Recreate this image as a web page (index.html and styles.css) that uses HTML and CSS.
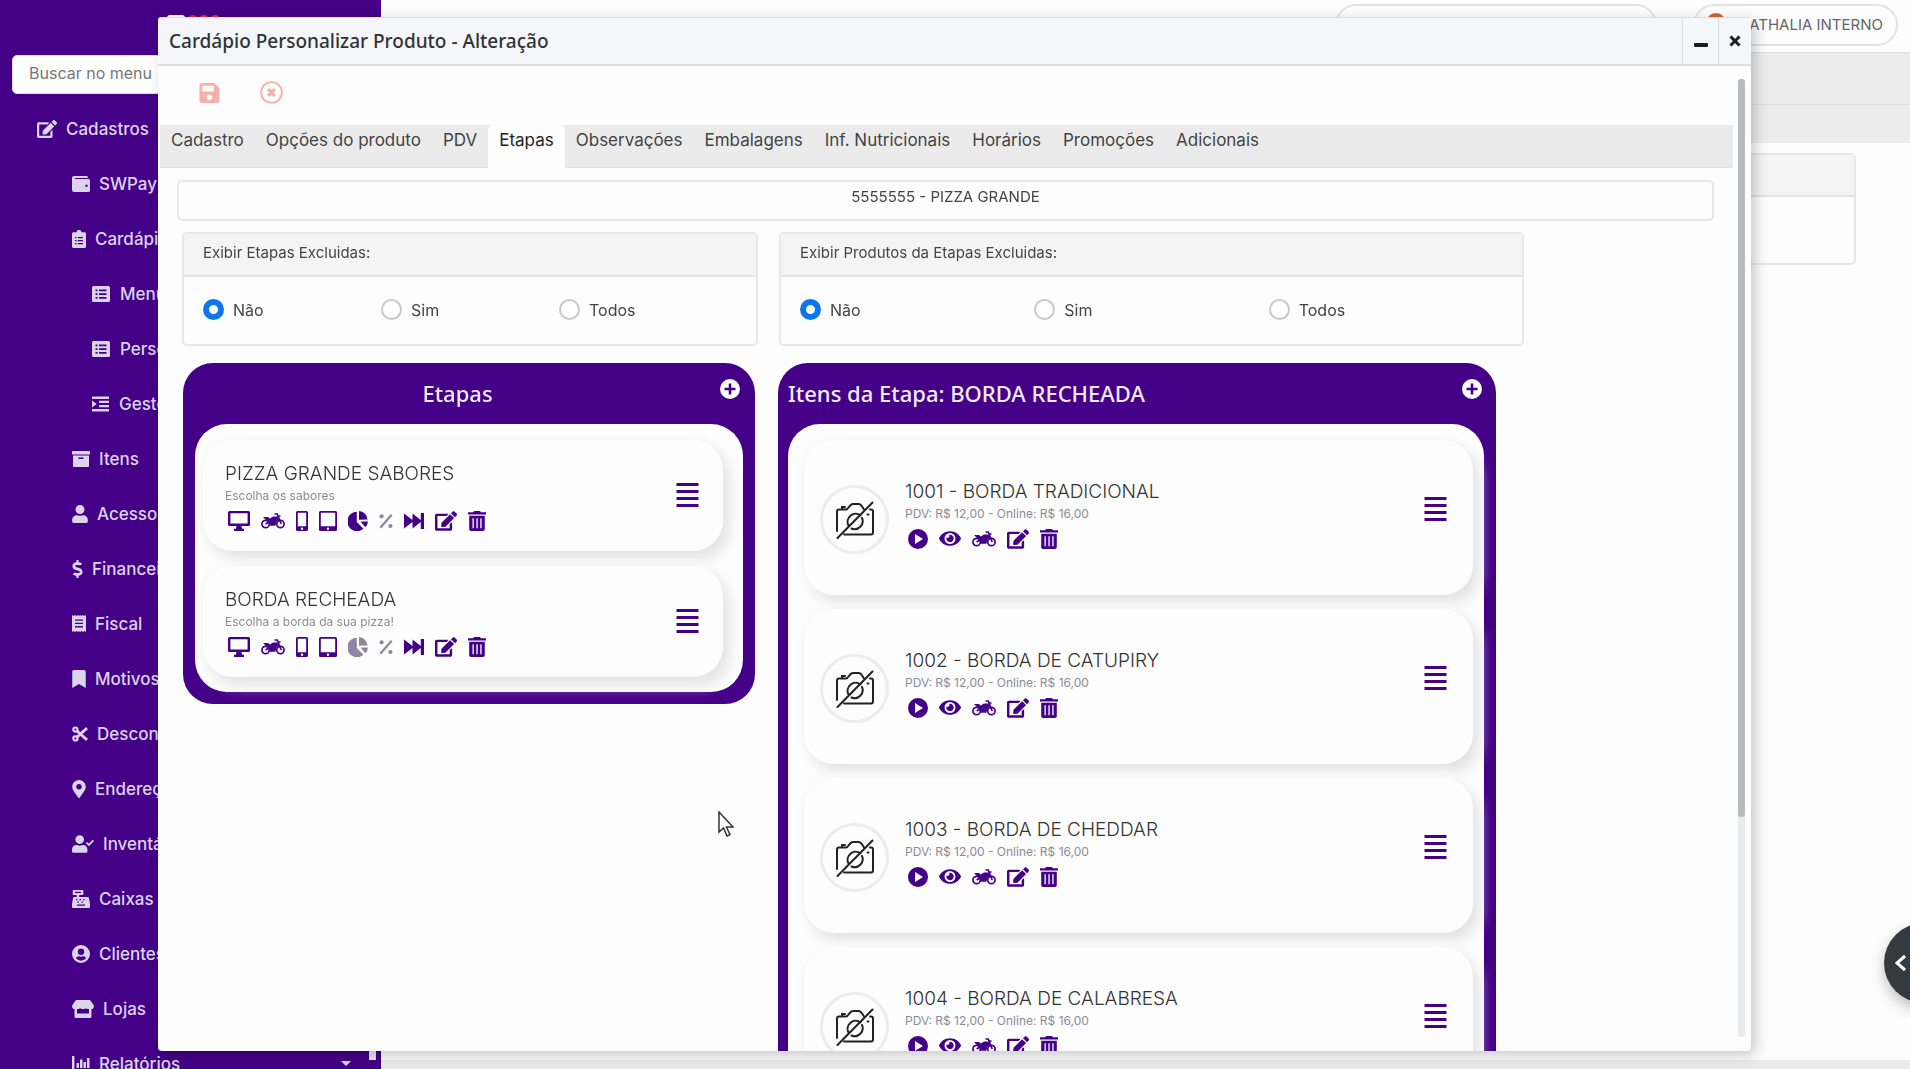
FILE: index.html
```
<!DOCTYPE html>
<html lang="pt-BR">
<head>
    <meta charset="UTF-8">
    <meta name="viewport" content="width=device-width, initial-scale=1.0">
    <title>Cardápio Personalizar Produto - Alteração</title>
    <link rel="stylesheet" href="styles.css">
</head>
<body>
    <!-- Icons -->
    <svg class="sprite" aria-hidden="true">
        <symbol id="i-edit" viewBox="0 0 576 512"><path d="M402.6 83.2l90.2 90.2c3.8 3.8 3.8 10 0 13.8L274.4 405.6l-92.8 10.3c-12.4 1.4-22.9-9.1-21.5-21.5l10.3-92.8L388.8 83.2c3.8-3.8 10-3.8 13.8 0zm162-22.9l-48.8-48.8c-15.2-15.2-39.9-15.2-55.2 0l-35.4 35.4c-3.8 3.8-3.8 10 0 13.8l90.2 90.2c3.8 3.8 10 3.8 13.8 0l35.4-35.4c15.2-15.3 15.2-40 0-55.2zM384 346.2V448H64V128h229.8c3.2 0 6.2-1.3 8.5-3.5l40-40c7.6-7.6 2.2-20.5-8.5-20.5H48C21.5 64 0 85.5 0 112v352c0 26.5 21.5 48 48 48h352c26.5 0 48-21.5 48-48V306.2c0-10.7-12.9-16-20.5-8.5l-40 40c-2.2 2.3-3.5 5.3-3.5 8.5z"/></symbol>
        <symbol id="i-save" viewBox="0 32 448 448"><path d="M433.941 129.941l-83.882-83.882A48 48 0 0 0 316.118 32H48C21.49 32 0 53.49 0 80v352c0 26.51 21.49 48 48 48h352c26.51 0 48-21.49 48-48V163.882a48 48 0 0 0-14.059-33.941zM224 416c-35.346 0-64-28.654-64-64 0-35.346 28.654-64 64-64s64 28.654 64 64c0 35.346-28.654 64-64 64zm96-304.52V212c0 6.627-5.373 12-12 12H76c-6.627 0-12-5.373-12-12V108c0-6.627 5.373-12 12-12h228.52c3.183 0 6.235 1.264 8.485 3.515l3.48 3.48A11.996 11.996 0 0 1 320 111.48z"/></symbol>
        <symbol id="i-cancel" viewBox="0 0 24 24"><circle cx="12" cy="12" r="10.8" fill="none" stroke="currentColor" stroke-width="2"/><path d="M8.5 8.5l7 7M15.5 8.5l-7 7" stroke="currentColor" stroke-width="3.4"/></symbol>
        <symbol id="i-wallet" viewBox="0 0 18 18"><path fill-rule="evenodd" d="M2 1h12.500a1.500 1.500 0 0 1 1.500 1.500V3H3v1h13.500A1.500 1.500 0 0 1 18 5.500v10a1.500 1.500 0 0 1-1.500 1.500H2.500A2.500 2.500 0 0 1 0 14.500V3a2 2 0 0 1 2-2zm12.500 8.500a1.200 1.200 0 1 0 0 2.400 1.200 1.200 0 0 0 0-2.400z"/></symbol>
        <symbol id="i-clip" viewBox="0 0 14 18"><path fill-rule="evenodd" d="M1.500 2.300H4.600a2.400 2.400 0 0 1 4.800 0h3.100A1.500 1.500 0 0 1 14 3.800v12.700a1.500 1.500 0 0 1-1.500 1.500h-11A1.500 1.500 0 0 1 0 16.500V3.800a1.500 1.500 0 0 1 1.500-1.500zM3 7v1.200h1.500V7zm2.700 0v1.200H11V7zM3 10v1.200h1.500V10zm2.700 0v1.200H11V10zM3 13v1.200h1.500V13zm2.700 0v1.200H11V13z"/></symbol>
        <symbol id="i-list" viewBox="0 0 18 16"><path fill-rule="evenodd" d="M1.500 0h15A1.500 1.500 0 0 1 18 1.500v13a1.500 1.500 0 0 1-1.500 1.500h-15A1.500 1.500 0 0 1 0 14.500v-13A1.500 1.500 0 0 1 1.500 0zM3.500 3.500v1.800h2V3.500zm3.500 0v1.800h7.500V3.500zM3.500 7.200V9h2V7.200zm3.500 0V9h7.500V7.200zM3.500 11v1.800h2V11zM7 11v1.800h7.500V11z"/></symbol>
        <symbol id="i-indent" viewBox="0 0 18 16"><path d="M0 0h18v2.600H0zM7.500 4.500H18V7H7.500zM7.500 9H18v2.500H7.500zM0 13.400h18V16H0zM0 4.300L5 8l-5 3.700z"/></symbol>
        <symbol id="i-box" viewBox="0 0 18 16"><path fill-rule="evenodd" d="M.8 0h16.400a.8.8 0 0 1 .8.800V3.500H0V.8A.8.800 0 0 1 .8 0zM1 4.600h16V15a1 1 0 0 1-1 1H2a1 1 0 0 1-1-1zm5.500 2v1.300h5V6.600z"/></symbol>
        <symbol id="i-user" viewBox="0 0 448 512"><path d="M224 256c70.700 0 128-57.300 128-128S294.700 0 224 0 96 57.300 96 128s57.300 128 128 128zm89.600 32h-16.700c-22.200 10.200-46.900 16-72.900 16s-50.600-5.800-72.900-16h-16.700C60.200 288 0 348.200 0 422.400V464c0 26.500 21.500 48 48 48h352c26.500 0 48-21.500 48-48v-41.600c0-74.200-60.200-134.400-134.400-134.400z"/></symbol>
        <symbol id="i-dollar" viewBox="0 0 288 512"><path d="M209.2 233.400l-108-31.600C88.700 198.200 80 186.500 80 173.500c0-16.300 13.200-29.500 29.500-29.500h66.300c12.200 0 24.200 3.700 34.200 10.500 6.100 4.100 14.300 3.100 19.500-2l34.800-34c7.100-6.900 6.100-18.400-1.800-24.500C238 74.800 207.400 64.100 176 64V16c0-8.800-7.200-16-16-16h-32c-8.800 0-16 7.200-16 16v48h-2.500C45.800 64-5.400 118.700.5 183.600c4.200 46.100 39.400 83.600 83.800 96.600l102.500 30c12.500 3.700 21.200 15.300 21.200 28.300 0 16.300-13.200 29.500-29.500 29.500h-66.300C100 368 88 364.300 78 357.500c-6.100-4.100-14.300-3.100-19.500 2l-34.800 34c-7.100 6.900-6.100 18.400 1.800 24.500 24.500 19.200 55.100 29.900 86.500 30v48c0 8.800 7.200 16 16 16h32c8.800 0 16-7.200 16-16v-48.200c46.600-.9 90.300-28.600 105.700-72.700 21.500-61.600-14.600-124.800-72.500-141.700z"/></symbol>
        <symbol id="i-receipt" viewBox="0 0 14 17"><path fill-rule="evenodd" d="M0 0l1.500 1L3 0l1.500 1L6 0l1 1 1-1 1.500 1L11 0l1.500 1L14 0v17l-1.500-1-1.500 1-1.500-1L8 17l-1-1-1 1-1.500-1L3 17l-1.500-1L0 17zM3 4.500v1.300h8V4.500zm0 3.300v1.300h8V7.800zm0 3.300v1.300h8v-1.300z"/></symbol>
        <symbol id="i-bookmark" viewBox="0 0 384 512"><path d="M0 512V48C0 21.490 21.490 0 48 0h288c26.510 0 48 21.490 48 48v464L192 400 0 512z"/></symbol>
        <symbol id="i-cut" viewBox="0 0 16 16"><g fill="none" stroke="currentColor"><circle cx="3.400" cy="3.600" r="2.100" stroke-width="2.200"/><circle cx="3.400" cy="12.400" r="2.100" stroke-width="2.200"/><path d="M5 5l10 8.800M5 11l10-8.800" stroke-width="2.900"/></g></symbol>
        <symbol id="i-pin" viewBox="0 0 384 512"><path d="M172.268 501.670C26.970 291.031 0 269.413 0 192 0 85.961 85.961 0 192 0s192 85.961 192 192c0 77.413-26.970 99.031-172.268 309.670-9.535 13.774-29.930 13.773-39.464 0zM192 272c44.183 0 80-35.817 80-80s-35.817-80-80-80-80 35.817-80 80 35.817 80 80 80z"/></symbol>
        <symbol id="i-usercheck" viewBox="0 0 640 512"><path d="M224 256c70.700 0 128-57.300 128-128S294.700 0 224 0 96 57.300 96 128s57.300 128 128 128zm89.600 32h-16.700c-22.200 10.200-46.900 16-72.900 16s-50.600-5.800-72.900-16h-16.700C60.200 288 0 348.200 0 422.400V464c0 26.500 21.500 48 48 48h352c26.500 0 48-21.500 48-48v-41.600c0-74.200-60.200-134.400-134.400-134.400z"/><path d="M420 215l72 70 130-135" fill="none" stroke="currentColor" stroke-width="56"/></symbol>
        <symbol id="i-register" viewBox="0 0 18 18"><path fill-rule="evenodd" d="M1.500 0h9a.8.8 0 0 1 .8.800v3.400a.8.8 0 0 1-.8.800H7.200v2H15.500a1.500 1.500 0 0 1 1.500 1.200L18 14v3a1 1 0 0 1-1 1H1a1 1 0 0 1-1-1v-3L1 8.200A1.500 1.500 0 0 1 2.500 7h2.200V5H1.500a.8.8 0 0 1-.8-.8V.8A.8.800 0 0 1 1.500 0zM3 1.800v1.200h6V1.800zM4 9v1.300h1.500V9zm3.500 0v1.300H9V9zM11 9v1.300h1.500V9zM5.500 11.500v1.300H7v-1.300zm4 0v1.300H11v-1.300zM5 14.600v1.200h8v-1.200z"/></symbol>
        <symbol id="i-usercircle" viewBox="0 0 18 18"><path fill-rule="evenodd" d="M9 0a9 9 0 1 1 0 18A9 9 0 0 1 9 0zm0 3.500a3.200 3.200 0 1 0 0 6.400 3.200 3.200 0 0 0 0-6.400zM3.900 13.300a6.700 6.700 0 0 0 10.200 0c-.5-1.300-1.700-2-3-2-1.500.6-2.700.6-4.200 0-1.300 0-2.500.7-3 2z"/></symbol>
        <symbol id="i-store" viewBox="0 0 22 18"><path fill-rule="evenodd" d="M4 0h14l3.600 5c1 2-.3 4-2.100 4V16.500a1.500 1.500 0 0 1-1.500 1.500H4a1.500 1.500 0 0 1-1.500-1.500V9C.7 9-.6 7 .4 5zM5 9v4.500h12V9c-1 .2-2 0-3-.8-1.800 1.200-4.200 1.200-6 0C7 9 6 9.200 5 9z"/></symbol>
        <symbol id="i-chart" viewBox="0 0 18 16"><path d="M0 0h2.400v13.600H18V16H0zM4.500 7H7v5H4.500zM8 3.500h2.500V12H8zM11.500 6H14v6h-2.500zM15 2h2.500v10H15z"/></symbol>
        <symbol id="i-plus" viewBox="0 0 20 20"><path fill-rule="evenodd" d="M10 0a10 10 0 1 1 0 20 10 10 0 0 1 0-20zM8.700 4.500v4.200H4.500v2.600h4.200v4.200h2.600v-4.200h4.200V8.700h-4.200V4.500z"/></symbol>
        <symbol id="i-monitor" viewBox="0 0 22 20"><path fill-rule="evenodd" d="M1.500 0h19A1.500 1.500 0 0 1 22 1.500v12a1.500 1.500 0 0 1-1.500 1.500h-7l.6 2.800H16V20H6v-2.200h1.900L8.500 15h-7A1.500 1.500 0 0 1 0 13.500v-12A1.500 1.500 0 0 1 1.500 0zM2.400 2.200v10.200h17.200V2.200z"/></symbol>
        <symbol id="i-moto" viewBox="0 0 24 16"><g fill="none" stroke="currentColor"><circle cx="4.600" cy="11" r="3.700" stroke-width="1.700"/><circle cx="19.400" cy="11" r="3.700" stroke-width="1.700"/><path d="M13.500 1h2.700l4 10M19.500 3h-2.700M4.600 11l4-2.500" stroke-width="1.700"/></g><path d="M2 4h5l1.800 1.500L12 3.500h4.500L18 6.500l-2.300 2-1.400 4.200H8.500C8.500 9.500 6.500 7.500 4.500 6.500z"/></symbol>
        <symbol id="i-phone" viewBox="0 0 12 20"><path fill-rule="evenodd" d="M1.500 0h9A1.500 1.500 0 0 1 12 1.500v17a1.500 1.500 0 0 1-1.500 1.500h-9A1.500 1.500 0 0 1 0 18.500v-17A1.500 1.500 0 0 1 1.500 0zM1.800 1.800v13.400h8.400V1.800zM6 16.500a1.200 1.200 0 1 0 0 2.400 1.200 1.200 0 0 0 0-2.400z"/></symbol>
        <symbol id="i-tablet" viewBox="0 0 18 20"><path fill-rule="evenodd" d="M1.500 0h15A1.500 1.500 0 0 1 18 1.500v17a1.500 1.500 0 0 1-1.500 1.500h-15A1.500 1.500 0 0 1 0 18.500v-17A1.500 1.500 0 0 1 1.500 0zM1.800 1.800v13.400h14.400V1.800zM9 16.500a1.200 1.200 0 1 0 0 2.400 1.200 1.200 0 0 0 0-2.400z"/></symbol>
        <symbol id="i-pie" viewBox="0 0 20 20"><path d="M8.800.8v10.100l6.600 6.800A9.700 9.700 0 1 1 8.800.8zM11 0a9 9 0 0 1 8.600 8.600L11 8.800zM12.500 10.600H20a9 9 0 0 1-2.600 5.600z"/></symbol>
        <symbol id="i-percent" viewBox="0 0 14 16"><path d="M1.300 14.700L12.700 1.800" stroke="currentColor" stroke-width="2.200"/><circle cx="2.600" cy="3.300" r="2.100"/><circle cx="11.400" cy="13" r="2.100"/></symbol>
        <symbol id="i-ff" viewBox="0 0 20 16"><path d="M0 .5L8.500 7V.5L16.800 7V0H20v16h-3.200V9L8.500 15.500V9L0 15.500z"/></symbol>
        <symbol id="i-trash" viewBox="0 0 18 20"><path fill-rule="evenodd" d="M6 0h6l.8 1.300H18v2.200H0V1.300h5.200zM1.200 4.700h15.600v13.500A1.800 1.800 0 0 1 15 20H3a1.800 1.800 0 0 1-1.800-1.800zM4.500 7.200v10h1.300v-10zm3.900 0v10h1.300v-10zm3.900 0v10h1.300v-10z"/></symbol>
        <symbol id="i-play" viewBox="0 0 20 20"><path fill-rule="evenodd" d="M10 0a10 10 0 1 1 0 20 10 10 0 0 1 0-20zM7 5v10l8-5z"/></symbol>
        <symbol id="i-eye" viewBox="0 64 576 384"><path d="M572.520 241.400C518.290 135.590 410.930 64 288 64S57.680 135.640 3.480 241.410a32.350 32.350 0 0 0 0 29.190C57.710 376.410 165.070 448 288 448s230.320-71.640 284.520-177.410a32.350 32.350 0 0 0 0-29.190zM288 400a144 144 0 1 1 144-144 143.930 143.930 0 0 1-144 144zm0-240a95.310 95.310 0 0 0-25.310 3.790 47.850 47.850 0 0 1-66.900 66.900A95.780 95.780 0 1 0 288 160z"/></symbol>
        <symbol id="i-bars" viewBox="0 0 22 24"><path d="M0 0h22v3H0zM0 7h22v3H0zM0 14h22v3H0zM0 21h22v3H0z"/></symbol>
        <symbol id="i-nophoto" viewBox="0 0 40 38"><g fill="none" stroke="currentColor" stroke-width="2" stroke-linecap="round"><path d="M29 8.500c-1.500-2-2-5-5-5.500h-6c-4 0-4 5.500-7 5.500H4a2 2 0 0 0-2 2V30M7 8V6h3M9 33.500h27a2 2 0 0 0 2-2v-21a2 2 0 0 0-2-2h-1M25.500 14.500a8 8 0 0 0-12 10M16.500 27.500A8 8 0 0 0 27 17M2.500 37L37.500 1.500M32.500 13.500h1"/></g></symbol>
    </svg>

    <header class="topbar">
        <div class="top-search"></div>
        <button class="user-pill"><span class="avatar"></span>NATHALIA INTERNO</button>
    </header>

    <main class="page">
        <div class="crumbs"></div>
        <div class="crumbs second"></div>
        <div class="page-card"><div class="page-card-head"></div></div>
        <div class="page-foot"></div>
    </main>

    <aside class="sidebar">
        <svg class="logo" viewBox="0 0 56 24"><rect width="18" height="24" rx="3" fill="#fff"/><g fill="#d8304a"><circle cx="26" cy="5" r="5"/><circle cx="37" cy="5" r="5"/><circle cx="48" cy="5" r="5"/></g></svg>
        <input class="menu-search" type="text" placeholder="Buscar no menu" aria-label="Buscar no menu">
        <nav class="menu">
            <a href="#" class="top"><svg width="20" height="18"><use href="#i-edit"/></svg>Cadastros</a>
            <a href="#"><svg width="18" height="18"><use href="#i-wallet"/></svg>SWPay</a>
            <a href="#"><svg width="14" height="18"><use href="#i-clip"/></svg>Cardápio</a>
            <a href="#" class="sub"><svg width="18" height="16"><use href="#i-list"/></svg>Menu</a>
            <a href="#" class="sub"><svg width="18" height="16"><use href="#i-list"/></svg>Personalizar</a>
            <a href="#" class="sub"><svg width="17" height="16"><use href="#i-indent"/></svg>Gestor</a>
            <a href="#"><svg width="18" height="16"><use href="#i-box"/></svg>Itens</a>
            <a href="#"><svg width="16" height="18"><use href="#i-user"/></svg>Acessos</a>
            <a href="#"><svg width="11" height="18"><use href="#i-dollar"/></svg>Financeiro</a>
            <a href="#"><svg width="14" height="17"><use href="#i-receipt"/></svg>Fiscal</a>
            <a href="#"><svg width="14" height="18"><use href="#i-bookmark"/></svg>Motivos</a>
            <a href="#"><svg width="16" height="16"><use href="#i-cut"/></svg>Descontos</a>
            <a href="#"><svg width="14" height="18"><use href="#i-pin"/></svg>Endereços</a>
            <a href="#"><svg width="22" height="18"><use href="#i-usercheck"/></svg>Inventário</a>
            <a href="#"><svg width="18" height="18"><use href="#i-register"/></svg>Caixas</a>
            <a href="#"><svg width="18" height="18"><use href="#i-usercircle"/></svg>Clientes</a>
            <a href="#"><svg width="22" height="18"><use href="#i-store"/></svg>Lojas</a>
            <a href="#"><svg width="18" height="16"><use href="#i-chart"/></svg>Relatórios<span class="caret"></span></a>
        </nav>
        <div class="side-scroll"></div>
    </aside>

    <button class="side-toggle" aria-label="Abrir painel"><svg width="12" height="18" viewBox="0 0 12 18"><path d="M10 2L2 9l8 7" fill="none" stroke="#fff" stroke-width="3"/></svg></button>

    <!-- Window -->
    <section class="window">
        <header class="window-head">
            <h1>Cardápio Personalizar Produto - Alteração</h1>
            <button class="win-btn min" aria-label="Minimizar"><svg width="14" height="14" viewBox="0 0 14 14"><rect y="9" width="14" height="4" rx="1"/></svg></button>
            <button class="win-btn" aria-label="Fechar"><svg width="12" height="12" viewBox="0 0 12 12"><path d="M1.500 1.500l9 9M10.500 1.500l-9 9" stroke="currentColor" stroke-width="3"/></svg></button>
        </header>

        <div class="toolbar">
            <button aria-label="Salvar"><svg width="21" height="20"><use href="#i-save"/></svg></button>
            <button aria-label="Cancelar"><svg width="23" height="23"><use href="#i-cancel"/></svg></button>
        </div>

        <nav class="tabs">
            <button>Cadastro</button>
            <button>Opções do produto</button>
            <button>PDV</button>
            <button class="active">Etapas</button>
            <button>Observações</button>
            <button>Embalagens</button>
            <button>Inf. Nutricionais</button>
            <button>Horários</button>
            <button>Promoções</button>
            <button>Adicionais</button>
        </nav>

        <div class="window-body">
            <div class="product-name">5555555 - PIZZA GRANDE</div>

            <div class="columns filters">
                <fieldset class="filter">
                    <legend>Exibir Etapas Excluidas:</legend>
                    <div class="options">
                        <label><input type="radio" name="etapas" checked>Não</label>
                        <label><input type="radio" name="etapas">Sim</label>
                        <label><input type="radio" name="etapas">Todos</label>
                    </div>
                </fieldset>
                <fieldset class="filter">
                    <legend>Exibir Produtos da Etapas Excluidas:</legend>
                    <div class="options">
                        <label><input type="radio" name="produtos" checked>Não</label>
                        <label><input type="radio" name="produtos">Sim</label>
                        <label><input type="radio" name="produtos">Todos</label>
                    </div>
                </fieldset>
            </div>

            <div class="columns panels">
                <section class="panel steps">
                    <header><h2>Etapas</h2><button aria-label="Adicionar etapa"><svg width="20" height="20"><use href="#i-plus"/></svg></button></header>
                    <div class="list">
                        <article class="card">
                            <div class="info">
                                <h3>PIZZA GRANDE SABORES</h3>
                                <p>Escolha os sabores</p>
                                <div class="actions">
                                    <button aria-label="PDV"><svg width="22" height="20"><use href="#i-monitor"/></svg></button>
                                    <button aria-label="Delivery"><svg width="24" height="16"><use href="#i-moto"/></svg></button>
                                    <button aria-label="Celular"><svg width="12" height="20"><use href="#i-phone"/></svg></button>
                                    <button aria-label="Tablet"><svg width="18" height="20"><use href="#i-tablet"/></svg></button>
                                    <button aria-label="Fracionar"><svg width="20" height="20"><use href="#i-pie"/></svg></button>
                                    <button class="off" aria-label="Percentual"><svg width="14" height="16"><use href="#i-percent"/></svg></button>
                                    <button aria-label="Avançar"><svg width="20" height="16"><use href="#i-ff"/></svg></button>
                                    <button aria-label="Editar"><svg width="22" height="20"><use href="#i-edit"/></svg></button>
                                    <button aria-label="Excluir"><svg width="18" height="20"><use href="#i-trash"/></svg></button>
                                </div>
                            </div>
                            <button class="drag" aria-label="Mover"><svg width="23" height="24"><use href="#i-bars"/></svg></button>
                        </article>
                        <article class="card">
                            <div class="info">
                                <h3>BORDA RECHEADA</h3>
                                <p>Escolha a borda da sua pizza!</p>
                                <div class="actions">
                                    <button aria-label="PDV"><svg width="22" height="20"><use href="#i-monitor"/></svg></button>
                                    <button aria-label="Delivery"><svg width="24" height="16"><use href="#i-moto"/></svg></button>
                                    <button aria-label="Celular"><svg width="12" height="20"><use href="#i-phone"/></svg></button>
                                    <button aria-label="Tablet"><svg width="18" height="20"><use href="#i-tablet"/></svg></button>
                                    <button class="off" aria-label="Fracionar"><svg width="20" height="20"><use href="#i-pie"/></svg></button>
                                    <button class="off" aria-label="Percentual"><svg width="14" height="16"><use href="#i-percent"/></svg></button>
                                    <button aria-label="Avançar"><svg width="20" height="16"><use href="#i-ff"/></svg></button>
                                    <button aria-label="Editar"><svg width="22" height="20"><use href="#i-edit"/></svg></button>
                                    <button aria-label="Excluir"><svg width="18" height="20"><use href="#i-trash"/></svg></button>
                                </div>
                            </div>
                            <button class="drag" aria-label="Mover"><svg width="23" height="24"><use href="#i-bars"/></svg></button>
                        </article>
                    </div>
                </section>

                <section class="panel items">
                    <header><h2>Itens da Etapa: BORDA RECHEADA</h2><button aria-label="Adicionar item"><svg width="20" height="20"><use href="#i-plus"/></svg></button></header>
                    <div class="list">
                        <article class="card">
                            <div class="photo"><svg width="40" height="38"><use href="#i-nophoto"/></svg></div>
                            <div class="info">
                                <h3>1001 - BORDA TRADICIONAL</h3>
                                <p>PDV: R$ 12,00 - Online: R$ 16,00</p>
                                <div class="actions">
                                    <button aria-label="Ativar"><svg width="20" height="20"><use href="#i-play"/></svg></button>
                                    <button aria-label="Exibir"><svg width="22" height="15"><use href="#i-eye"/></svg></button>
                                    <button aria-label="Delivery"><svg width="24" height="16"><use href="#i-moto"/></svg></button>
                                    <button aria-label="Editar"><svg width="22" height="20"><use href="#i-edit"/></svg></button>
                                    <button aria-label="Excluir"><svg width="18" height="20"><use href="#i-trash"/></svg></button>
                                </div>
                            </div>
                            <button class="drag" aria-label="Mover"><svg width="23" height="24"><use href="#i-bars"/></svg></button>
                        </article>
                        <article class="card">
                            <div class="photo"><svg width="40" height="38"><use href="#i-nophoto"/></svg></div>
                            <div class="info">
                                <h3>1002 - BORDA DE CATUPIRY</h3>
                                <p>PDV: R$ 12,00 - Online: R$ 16,00</p>
                                <div class="actions">
                                    <button aria-label="Ativar"><svg width="20" height="20"><use href="#i-play"/></svg></button>
                                    <button aria-label="Exibir"><svg width="22" height="15"><use href="#i-eye"/></svg></button>
                                    <button aria-label="Delivery"><svg width="24" height="16"><use href="#i-moto"/></svg></button>
                                    <button aria-label="Editar"><svg width="22" height="20"><use href="#i-edit"/></svg></button>
                                    <button aria-label="Excluir"><svg width="18" height="20"><use href="#i-trash"/></svg></button>
                                </div>
                            </div>
                            <button class="drag" aria-label="Mover"><svg width="23" height="24"><use href="#i-bars"/></svg></button>
                        </article>
                        <article class="card">
                            <div class="photo"><svg width="40" height="38"><use href="#i-nophoto"/></svg></div>
                            <div class="info">
                                <h3>1003 - BORDA DE CHEDDAR</h3>
                                <p>PDV: R$ 12,00 - Online: R$ 16,00</p>
                                <div class="actions">
                                    <button aria-label="Ativar"><svg width="20" height="20"><use href="#i-play"/></svg></button>
                                    <button aria-label="Exibir"><svg width="22" height="15"><use href="#i-eye"/></svg></button>
                                    <button aria-label="Delivery"><svg width="24" height="16"><use href="#i-moto"/></svg></button>
                                    <button aria-label="Editar"><svg width="22" height="20"><use href="#i-edit"/></svg></button>
                                    <button aria-label="Excluir"><svg width="18" height="20"><use href="#i-trash"/></svg></button>
                                </div>
                            </div>
                            <button class="drag" aria-label="Mover"><svg width="23" height="24"><use href="#i-bars"/></svg></button>
                        </article>
                        <article class="card">
                            <div class="photo"><svg width="40" height="38"><use href="#i-nophoto"/></svg></div>
                            <div class="info">
                                <h3>1004 - BORDA DE CALABRESA</h3>
                                <p>PDV: R$ 12,00 - Online: R$ 16,00</p>
                                <div class="actions">
                                    <button aria-label="Ativar"><svg width="20" height="20"><use href="#i-play"/></svg></button>
                                    <button aria-label="Exibir"><svg width="22" height="15"><use href="#i-eye"/></svg></button>
                                    <button aria-label="Delivery"><svg width="24" height="16"><use href="#i-moto"/></svg></button>
                                    <button aria-label="Editar"><svg width="22" height="20"><use href="#i-edit"/></svg></button>
                                    <button aria-label="Excluir"><svg width="18" height="20"><use href="#i-trash"/></svg></button>
                                </div>
                            </div>
                            <button class="drag" aria-label="Mover"><svg width="23" height="24"><use href="#i-bars"/></svg></button>
                        </article>
                    </div>
                </section>
            </div>
        </div>
        <div class="scroll-track"><div class="scroll-thumb"></div></div>
    </section>

    <svg class="pointer" width="16" height="26" viewBox="0 0 16 26"><path d="M1 1v20l4.500-4 3.500 8 3-1.300-3.500-7.700H15z" fill="#fff" stroke="#333" stroke-width="1.500"/></svg>
</body>
</html>
```
FILE: styles.css
```
* { box-sizing: border-box; margin: 0; }
body {
    height: 100vh; overflow: hidden; background: #fdfdfd; color: #444;
    font-family: Inter, "Noto Sans", sans-serif; font-size: 16px;
}
button { background: none; border: none; padding: 0; font: inherit; color: inherit; cursor: pointer; }
svg { display: block; flex: none; fill: currentColor; }
.sprite { position: absolute; width: 0; height: 0; }

/* Top bar */
.topbar {
    display: flex; justify-content: flex-end; align-items: flex-start; gap: 36px;
    height: 53px; padding: 4px 12px 0 0; border-bottom: 1px solid #ddd;
}
.top-search { width: 322px; height: 42px; border: 2px solid #e2e2e2; border-radius: 21px; }
.user-pill {
    display: flex; align-items: flex-start; justify-content: flex-end; gap: 12px;
    width: 205px; height: 42px; padding: 7px 13px 0 0;
    border: 2px solid #e2e2e2; border-radius: 21px; color: #666; font-size: 15px; line-height: 24px; white-space: nowrap;
}
.avatar { flex: none; width: 20px; height: 20px; border-radius: 50%; background: #d9602f; }

/* Page behind the window */
.crumbs { height: 51px; background: #ececec; }
.crumbs.second { height: 39px; border-top: 1px solid #dfdfdf; }
.page-card { height: 112px; margin: 10px 54px 0 400px; border: 2px solid #e6e6e6; border-radius: 5px; }
.page-card-head { height: 42px; background: #f4f4f4; border-bottom: 2px solid #e2e2e2; }
.page-foot { position: fixed; left: 0; right: 0; bottom: 0; height: 9px; background: #ebebeb; }

/* Sidebar */
.sidebar { position: fixed; left: 0; top: 0; bottom: 0; width: 381px; background: #440087; overflow: hidden; padding-top: 15px; }
.logo { width: 56px; height: 24px; margin: 0 0 16px 167px; }
.menu-search {
    display: block; width: 345px; height: 39px; margin-left: 12px; padding: 0 16px 4px;
    border: 1px solid #ddd; border-radius: 5px; background: #fff; font: 16px Inter, sans-serif;
}
.menu-search::placeholder { color: #777; }
.menu { padding-top: 7px; }
.menu a {
    display: flex; align-items: center; gap: 9px; height: 55px; padding-left: 72px;
    color: #dcd4ea; font-size: 17px; font-weight: 500; text-decoration: none;
}
.menu a.top { padding-left: 37px; }
.menu a.sub { padding-left: 92px; gap: 10px; }
.caret { margin-left: auto; margin-right: 30px; border: 5px solid transparent; border-top-color: #dcd4ea; border-bottom: 0; }
.side-scroll { position: absolute; right: 5px; top: 100px; bottom: 9px; width: 7px; background: #e8e3f0; }

.side-toggle {
    position: fixed; right: -54px; bottom: 66px; width: 80px; height: 80px; padding-left: 11px;
    border-radius: 50%; background: #343a40; box-shadow: 0 6px 14px rgba(0, 0, 0, 0.25);
}

/* Window */
.window {
    position: fixed; left: 158px; right: 159px; top: 17px; bottom: 18px;
    display: flex; flex-direction: column; overflow: hidden;
    background: #fdfdfd; border-radius: 4px; box-shadow: 4px 4px 14px rgba(0, 0, 0, 0.22);
}
.window-head {
    display: flex; align-items: center; flex: none; height: 49px; padding-left: 11px;
    background: #f5f6f9; border: 1px solid #dcdee0; border-width: 1px 0 2px;
}
.window-head h1 { flex: 1; font: 500 19px "Noto Sans", sans-serif; color: #333; }
.win-btn {
    display: flex; align-items: center; justify-content: center;
    width: 33px; height: 100%; border-left: 1px solid #dcdee0; color: #1c1c1c;
}
.win-btn.min { width: 36px; }
.toolbar { display: flex; align-items: center; gap: 40px; flex: none; height: 59px; padding: 0 0 6px 41px; color: #f5b0ac; }
.tabs { display: flex; flex: none; height: 43px; margin: 0 18px 0 2px; background: #ebebeb; border-bottom: 1px solid #e2e2e2; }
.tabs button { height: 43px; padding: 0 11px 14px; font-size: 17px; color: #444; white-space: nowrap; }
.tabs .active { background: #fdfdfd; border-radius: 5px 5px 0 0; color: #222; }

.window-body { flex: 1; min-height: 0; overflow: hidden; padding: 12px 37px 0 19px; }
.product-name {
    height: 41px; border: 2px solid #e8e8e8; border-radius: 5px;
    text-align: center; line-height: 30px; font-size: 15px;
}
.columns { display: grid; align-items: start; padding: 0 0 0 5px; }
.filters { grid-template-columns: 576fr 745fr 169fr; gap: 21px; margin-top: 11px; font-size: 16px; }
.panels { grid-template-columns: 572fr 718fr 195fr; gap: 23px; margin-top: 17px; padding-left: 6px; }
.filter { min-width: 0; padding: 0; border: 2px solid #e8e8e8; border-radius: 5px; }
.filter legend {
    float: left; width: 100%; height: 43px; padding: 0 19px; line-height: 37px; font-size: 15px;
    background: #f4f4f4; border-bottom: 2px solid #e6e6e6;
}
.options { clear: both; display: grid; grid-template-columns: repeat(3, 1fr); height: 67px; padding: 0 19px 2px; align-items: center; }
.options label { display: flex; align-items: center; gap: 9px; }
.options input {
    appearance: none; width: 21px; height: 21px; margin: 0;
    border: 2px solid #c9c9c9; border-radius: 50%; background: #fff;
}
.options input:checked { border: 6px solid #0d75f2; }

/* Panels */
.panel { padding: 0 12px 12px; border-radius: 30px; background: #440087; }
.panel header { display: flex; align-items: flex-start; height: 61px; color: #f1ecf8; }
.panel h2 { flex: 1; padding-top: 15px; font: 500 22px/30px "Noto Sans", sans-serif; white-space: nowrap; }
.panel header button { margin-top: 16px; color: #fff; }
.steps header { padding-right: 3px; }
.steps h2 { text-align: center; }
.items { padding: 0 12px 12px 10px; }
.items header { padding-right: 2px; }
.list { display: grid; gap: 15px; padding: 16px 20px 15px 8px; border-radius: 32px; background: #fdfdfd; }
.card {
    display: flex; align-items: center; height: 111px; padding: 0 24px 0 22px;
    border-radius: 30px; background: #fdfdfd;
    box-shadow: 6px 8px 14px #e2e2e2, -2px -4px 6px #fafafa;
}
.items .list { gap: 14px; padding: 16px 11px 15px 16px; }
.items .card { height: 155px; padding: 0 26px 0 16px; }
.info { flex: 1; min-width: 0; }
.card h3 { font-size: 19px; font-weight: 300; line-height: 26px; color: #333; }
.card p { font-size: 12px; line-height: 18px; color: #8b8b98; }
.actions { display: flex; align-items: center; gap: 11px; height: 20px; margin: 6px 0 0 3px; color: #440087; }
.actions .off { color: #8d86a3; }
.drag { margin-bottom: 2px; color: #440087; }
.items .drag { margin-bottom: 18px; }
.items .info { padding-bottom: 8px; }
.photo {
    display: flex; align-items: center; justify-content: center; flex: none;
    width: 69px; height: 69px; margin: 4px 16px 0 0; border: 3px solid #ececec; border-radius: 50%; color: #222;
}

.scroll-track { position: absolute; right: 6px; top: 62px; bottom: 14px; width: 7px; border-radius: 3px; background: #e9eaeb; }
.scroll-thumb { height: 77%; border-radius: 3px; background: #b9bbbc; }
.pointer { position: fixed; left: 718px; top: 811px; }
```
